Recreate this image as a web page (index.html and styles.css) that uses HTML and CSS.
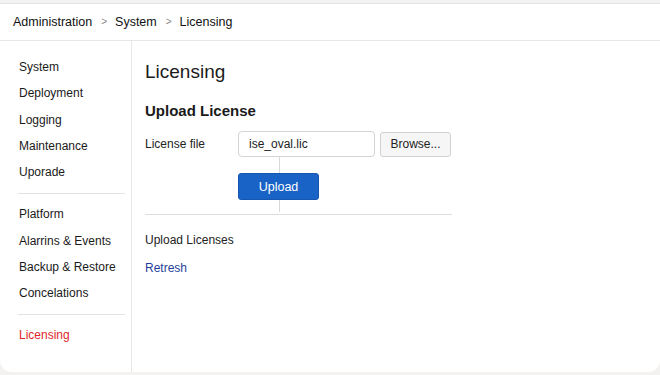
FILE: index.html
```html
<!DOCTYPE html>
<html>
<head>
<meta charset="utf-8">
<link rel="stylesheet" href="styles.css">
</head>
<body>
<div class="card">
  <header class="crumbs">
    <span>Administration</span><span class="sep">&gt;</span><span>System</span><span class="sep">&gt;</span><span>Licensing</span>
  </header>
  <div class="body">
    <nav class="side">
      <ul class="group">
        <li>System</li>
        <li>Deployment</li>
        <li>Logging</li>
        <li>Maintenance</li>
        <li>Uporade</li>
      </ul>
      <ul class="group">
        <li>Platform</li>
        <li>Alarrins &amp; Events</li>
        <li>Backup &amp; Restore</li>
        <li>Concelations</li>
      </ul>
      <ul class="group last">
        <li class="active">Licensing</li>
      </ul>
    </nav>
    <main class="main">
      <h1>Licensing</h1>
      <h2>Upload License</h2>
      <div class="form">
        <div class="row">
          <label class="lbl">License file</label>
          <div class="input">ise_oval.lic</div>
          <button class="browse">Browse...</button>
        </div>
        <div class="uprow">
          <span class="connector"></span>
          <button class="upload">Upload</button>
        </div>
      </div>
      <div class="divider"></div>
      <div class="sub">Upload Licenses</div>
      <a class="refresh">Retresh</a>
    </main>
  </div>
</div>
</body>
</html>
```
FILE: styles.css
```css
* { box-sizing: border-box; }
html, body { margin: 0; padding: 0; }
body {
  width: 660px;
  height: 375px;
  background: #f4f2f0;
  font-family: "Liberation Sans", Arial, sans-serif;
  color: #222;
  overflow: hidden;
  padding-top: 3px;
}
.card {
  background: #fff;
  height: 369px;
  border-top: 1px solid #e3e3e3;
  border-radius: 0 0 12px 12px;
  display: flex;
  flex-direction: column;
}
.crumbs {
  height: 37px;
  border-bottom: 1px solid #e6e6e6;
  display: flex;
  align-items: center;
  padding-left: 13px;
  font-size: 12.5px;
  color: #111;
  padding-bottom: 1px;
}
.crumbs .sep {
  color: #888;
  font-size: 10px;
  margin: 0 8px 0 9px;
}
.body {
  flex: 1;
  display: flex;
}
.side {
  width: 132px;
  border-right: 1px solid #e8e8e8;
  padding: 13px 6px 0 18px;
}
.group {
  list-style: none;
  margin: 0;
  padding: 0 0 8px 0;
  border-bottom: 1px solid #e3e3e3;
  margin-bottom: 7px;
}
.group.last { border-bottom: none; }
.group li {
  height: 26.25px;
  line-height: 26px;
  font-size: 12px;
  padding-left: 1px;
  color: #1a1a1a;
}
.group li.active { color: #e0262b; }
.main {
  flex: 1;
  padding: 19px 0 0 13px;
}
h1 {
  margin: 0;
  font-weight: 400;
  font-size: 19px;
  line-height: 24px;
  color: #1a1a1a;
}
h2 {
  margin: 17px 0 0 0;
  font-weight: 600;
  font-size: 15px;
  line-height: 20px;
  color: #1a1a1a;
}
.form { width: 307px; margin-top: 10px; }
.row {
  display: flex;
  align-items: center;
  height: 26px;
}
.lbl {
  width: 93px;
  font-size: 12px;
  color: #222;
}
.input {
  width: 137px;
  height: 26px;
  border: 1px solid #d4d4d4;
  border-radius: 4px;
  font-size: 12px;
  line-height: 24px;
  padding-left: 10px;
  color: #222;
}
.browse {
  margin-left: 5px;
  width: 71px;
  height: 25px;
  border: 1px solid #d2d2d2;
  border-radius: 3px;
  background: #f6f6f6;
  font-family: inherit;
  font-size: 12px;
  color: #222;
  padding: 0;
}
.uprow {
  position: relative;
  padding: 16px 0 12px 93px;
}
.connector {
  position: absolute;
  left: 134px;
  top: 0;
  bottom: 0;
  width: 1px;
  background: #d8d8d8;
}
.upload {
  position: relative;
  width: 81px;
  height: 27px;
  border: 1px solid #1556b0;
  border-radius: 3px;
  background: #1a63c6;
  color: #fff;
  font-family: inherit;
  font-size: 12.5px;
  padding: 0;
}
.divider {
  width: 307px;
  height: 1px;
  background: #dcdcdc;
  margin-top: 2px;
}
.sub {
  margin-top: 17px;
  font-size: 12px;
  line-height: 16px;
  color: #222;
}
.refresh {
  display: block;
  margin-top: 12px;
  font-size: 12px;
  line-height: 16px;
  color: #1f3f9c;
}
```
